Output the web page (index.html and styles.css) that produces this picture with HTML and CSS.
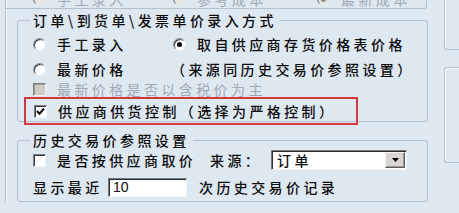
FILE: index.html
```html
<!DOCTYPE html>
<html lang="zh-CN">
<head>
<meta charset="utf-8">
<link rel="stylesheet" href="styles.css">
</head>
<body>
<div class="page">
  <div class="main">
    <div class="panel">
      <div class="topgroup">
        <div class="toprow dim">
          <span class="opt t1"><i class="radio dis"></i>手工录入</span>
          <span class="opt t2"><i class="radio dis"></i>参考成本</span>
          <span class="opt"><i class="radio dis on"></i>最新成本</span>
        </div>
      </div>
      <fieldset class="group g1">
        <legend>订单\到货单\发票单价录入方式</legend>
        <div class="row r1">
          <span class="opt c1"><i class="radio"></i>手工录入</span>
          <span class="opt"><i class="radio on"></i>取自供应商存货价格表价格</span>
        </div>
        <div class="row r2">
          <span class="opt c1"><i class="radio"></i>最新价格</span>
          <span class="note">（来源同历史交易价参照设置）</span>
        </div>
        <div class="row r3 dim">
          <span class="opt"><i class="check dis"></i>最新价格是否以含税价为主</span>
        </div>
        <div class="hl">
          <span class="opt"><i class="check"><svg viewBox="0 0 9 9" width="9" height="9"><polyline points="1,4 3.5,6.8 8,1.5" fill="none" stroke="#000" stroke-width="2"/></svg></i>供应商供货控制（选择为严格控制）</span>
        </div>
      </fieldset>
      <fieldset class="group g2">
        <legend>历史交易价参照设置</legend>
        <div class="row ra">
          <span class="opt c2"><i class="check"></i>是否按供应商取价</span>
          <span class="lbl src">来源：</span>
          <span class="combo"><span class="val">订单</span><span class="btn"><svg viewBox="0 0 7 4" width="7" height="4"><polygon points="0,0 7,0 3.5,4" fill="#000"/></svg></span></span>
        </div>
        <div class="row rb">
          <span class="lbl c3">显示最近</span>
          <span class="input">10</span>
          <span class="lbl after">次历史交易价记录</span>
        </div>
      </fieldset>
    </div>
  </div>
  <div class="side">
    <div class="box b1"></div>
    <div class="box b2"></div>
  </div>
</div>
</body>
</html>
```

FILE: styles.css
```css
* { box-sizing: border-box; }
html, body { margin: 0; padding: 0; }
body {
  background: #dee8f1;
  font-family: "Noto Sans CJK SC", "Noto Sans", sans-serif;
  font-size: 14px;
  font-weight: 500;
  color: #0c0c0c;
  overflow: hidden;
}
.page {
  display: flex;
  width: 459px;
  height: 213px;
  overflow: hidden;
}
.main {
  width: 444px;
  flex: none;
  padding-left: 5px;
}
.panel {
  height: 213px;
  border-left: 1px solid #b4c1ce;
  box-shadow: inset 1px 0 0 #f4f8fb;
  padding-left: 11px;
}
.topgroup {
  margin-top: -10px;
  margin-left: -11px;
  width: 421px;
  height: 19px;
  border-right: 1px solid #b4c1ce;
  border-bottom: 1px solid #b4c1ce;
  border-bottom-right-radius: 3px;
  padding-left: 27px;
}
.toprow {
  display: flex;
  align-items: center;
  height: 18px;
}
.t1 { width: 140px; }
.t2 { width: 144px; }

.opt {
  display: flex;
  align-items: center;
  letter-spacing: 3.4px;
  white-space: nowrap;
}
.note, .lbl, legend {
  letter-spacing: 3.4px;
  white-space: nowrap;
}
.dim { color: #9ea9b4; font-weight: 400; }

.radio {
  flex: none;
  display: block;
  position: relative;
  width: 13px;
  height: 13px;
  margin-right: 11px;
  border-radius: 50%;
  background: #fff;
  border: 1px solid;
  border-color: #8a8f96 #e9ecef #e9ecef #8a8f96;
  box-shadow: inset 1px 1px 0 #3c3c3c;
}
.radio.on::after {
  content: "";
  position: absolute;
  left: 3px;
  top: 3px;
  width: 5px;
  height: 5px;
  border-radius: 50%;
  background: #000;
}
.radio.dis { background: #e8e6e0; box-shadow: inset 1px 1px 0 #9a9a9a; }
.radio.dis.on::after { background: #8a8a8a; }

.check {
  flex: none;
  display: flex;
  align-items: center;
  justify-content: center;
  width: 13px;
  height: 13px;
  margin-right: 11px;
  background: #fff;
  border: 1px solid;
  border-color: #7f7f7f #f2f2f2 #f2f2f2 #7f7f7f;
  box-shadow: inset 1px 1px 0 #3a3a3a;
}
.check.dis { background: #cfccc4; box-shadow: inset 1px 1px 0 #9b9891; }

.group {
  margin: 0;
  width: 411px;
  border: 1px solid #b4c1ce;
  border-radius: 3px;
  padding: 0 0 0 12px;
  min-width: 0;
}
.group legend {
  padding: 0 3px;
  height: 20px;
  line-height: 20px;
}
.g1 { margin-top: 1px; }
.g2 { margin-top: 8px; padding-bottom: 4px; }

.row {
  display: flex;
  align-items: center;
  height: 20px;
  padding-left: 3px;
}
.r1 { margin-top: 4px; }
.r2 { margin-top: 5px; }
.r3 { height: 18px; margin-top: 1px; }
.c1 { width: 140px; }
.note { margin-left: -2px; }

.hl {
  display: flex;
  align-items: center;
  width: 334px;
  height: 28px;
  margin: -1px 0 -4px -6px;
  padding-left: 8px;
  border: 2px solid #d4393d;
}

.ra { margin-top: 0; }
.c2 { width: 177px; }
.src { width: 61px; }
.combo {
  display: flex;
  align-items: center;
  width: 136px;
  height: 20px;
  background: #fff;
  border: 1px solid;
  border-color: #7a7a7a #f4f4f4 #f4f4f4 #7a7a7a;
  box-shadow: inset 1px 1px 0 #2e2e2e;
  padding: 0 1px 0 5px;
}
.val { flex: 1; letter-spacing: 3.4px; }
.btn {
  display: flex;
  align-items: center;
  justify-content: center;
  width: 20px;
  height: 16px;
  background: #d8d6cf;
  border: 1px solid;
  border-color: #f6f6f3 #5c5c5c #5c5c5c #f6f6f3;
  box-shadow: inset -1px -1px 0 #9c9a94;
}

.rb { margin-top: 7px; }
.c3 { width: 75px; }
.input {
  display: flex;
  align-items: center;
  width: 79px;
  height: 19px;
  background: #fff;
  border: 1px solid;
  border-color: #7a7a7a #f4f4f4 #f4f4f4 #7a7a7a;
  box-shadow: inset 1px 1px 0 #2e2e2e;
  padding-left: 4px;
  font-family: "Liberation Sans", sans-serif;
  font-size: 14px;
  font-weight: 400;
}
.after { margin-left: 12px; }

.side {
  flex: 1;
}
.box {
  border: 1px solid #b4c1ce;
  box-shadow: inset 1px 1px 0 #f4f8fb;
}
.b1 {
  height: 53px;
  margin-top: -3px;
  border-right: none;
  border-top: none;
  border-bottom-left-radius: 3px;
}
.b2 {
  height: 96px;
  margin-top: 17px;
  border-right: none;
  border-radius: 3px 0 0 3px;
}
```
